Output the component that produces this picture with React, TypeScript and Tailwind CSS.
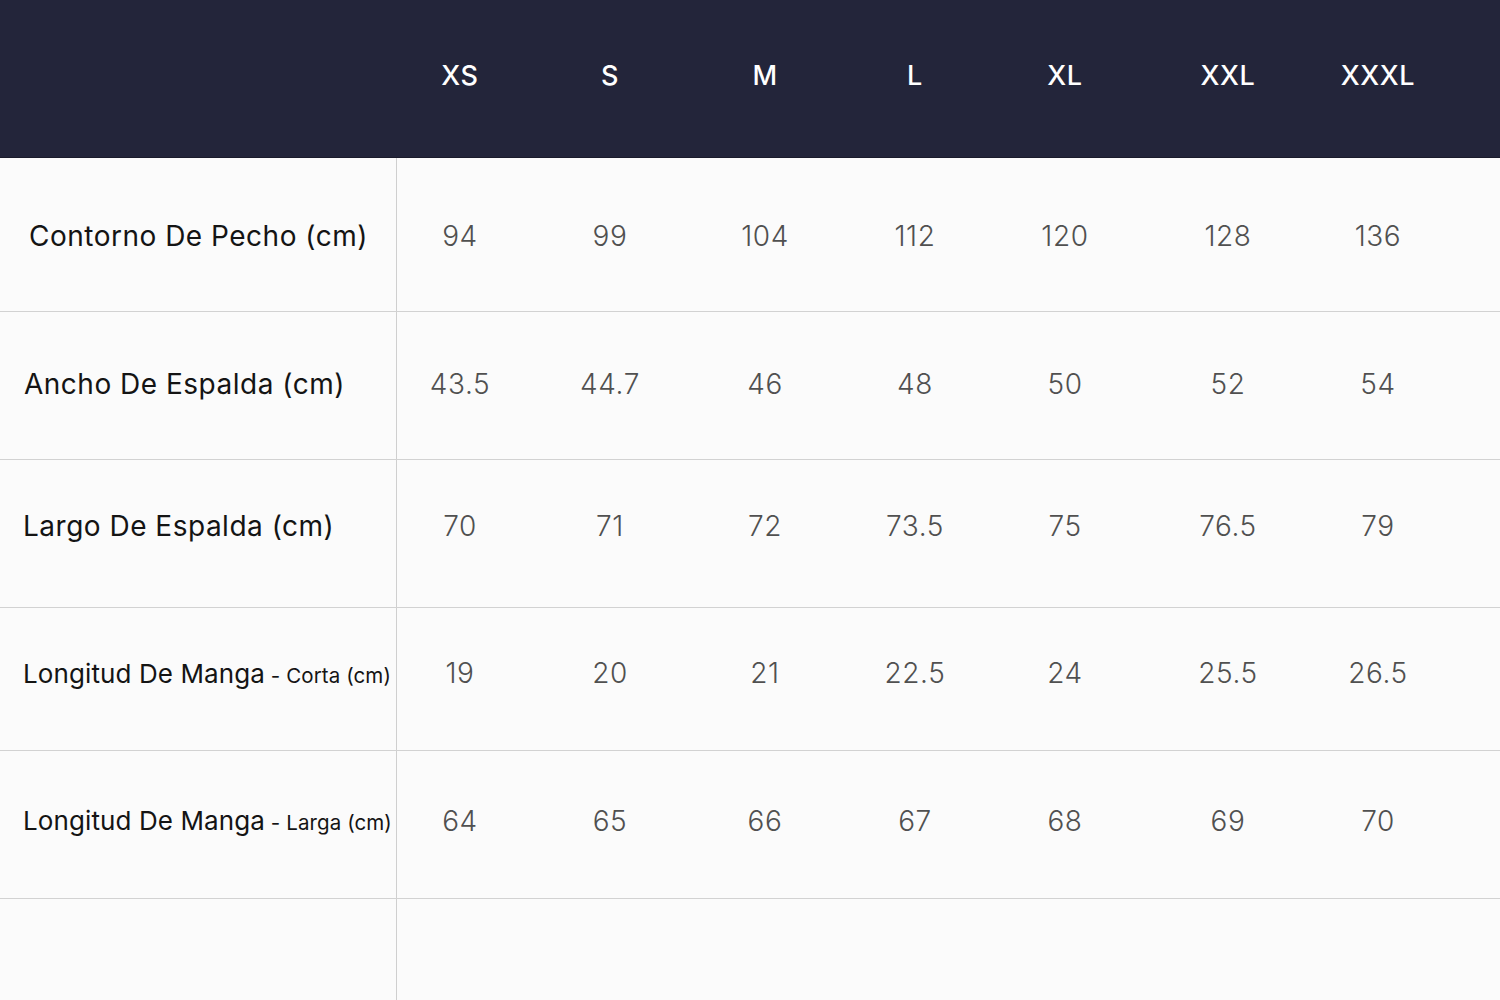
import React from "react";

const sizes = ["XS", "S", "M", "L", "XL", "XXL", "XXXL"];
const widths = ["w-[126px]", "w-[174px]", "w-[136px]", "w-[164px]", "w-[136px]", "w-[190px]", "w-[110px]"];

const rows: { label: React.ReactNode; h: string; pl: string; pad: string; lbl: string; values: string[] }[] = [
  { label: "Contorno De Pecho (cm)", h: "h-[154px]", pl: "pl-[29px]", pad: "pt-[2px]", lbl: "text-[28px] tracking-[0.5px]", values: ["94", "99", "104", "112", "120", "128", "136"] },
  { label: "Ancho De Espalda (cm)", h: "h-[148px]", pl: "pl-[24px]", pad: "pb-[4px]", lbl: "text-[28px] tracking-[0.5px]", values: ["43.5", "44.7", "46", "48", "50", "52", "54"] },
  { label: "Largo De Espalda (cm)", h: "h-[148px]", pl: "pl-[23px]", pad: "pb-[16px]", lbl: "text-[28px] tracking-[0.5px]", values: ["70", "71", "72", "73.5", "75", "76.5", "79"] },
  {
    label: (
      <>
        Longitud De Manga<span className="text-[20.5px]"> - Corta (cm)</span>
      </>
    ),
    h: "h-[143px]",
    pl: "pl-[23px]",
    pad: "pb-[12px]",
    lbl: "text-[26px] tracking-[0.1px]",
    values: ["19", "20", "21", "22.5", "24", "25.5", "26.5"],
  },
  {
    label: (
      <>
        Longitud De Manga<span className="text-[20.5px]"> - Larga (cm)</span>
      </>
    ),
    h: "h-[148px]",
    pl: "pl-[23px]",
    pad: "pb-[8px]",
    lbl: "text-[26px] tracking-[0.1px]",
    values: ["64", "65", "66", "67", "68", "69", "70"],
  },
];

export default function App() {
  return (
    <div className="w-[1500px] h-[1000px] overflow-hidden bg-[#fbfbfb]" style={{ fontFamily: "Inter, 'Liberation Sans', sans-serif" }}>
      <div className="flex h-[158px] items-center bg-[#23253a] border-b border-[#1a1b2b] pb-[4px]">
        <div className="w-[397px] shrink-0" />
        {sizes.map((s, i) => (
          <div key={s} className={`${widths[i]} shrink-0 text-center text-[27px] font-medium text-white tracking-[0.6px]`}>
            {s}
          </div>
        ))}
      </div>
      {rows.map((r, ri) => (
        <div key={ri} className={`flex ${r.h} border-b border-[#d2d2d2]`}>
          <div className={`w-[397px] shrink-0 flex items-center ${r.pl} ${r.pad} border-r border-[#cfcfcf] ${r.lbl} text-[#141414] whitespace-nowrap`}>
            <span>{r.label}</span>
          </div>
          {r.values.map((v, i) => (
            <div key={i} className={`${widths[i]} shrink-0 flex items-center justify-center ${r.pad} text-[28px] font-light text-[#505050] tracking-[0.6px]`}>
              {v}
            </div>
          ))}
        </div>
      ))}
      <div className="flex h-[101px]">
        <div className="w-[397px] shrink-0 border-r border-[#cfcfcf]" />
      </div>
    </div>
  );
}
